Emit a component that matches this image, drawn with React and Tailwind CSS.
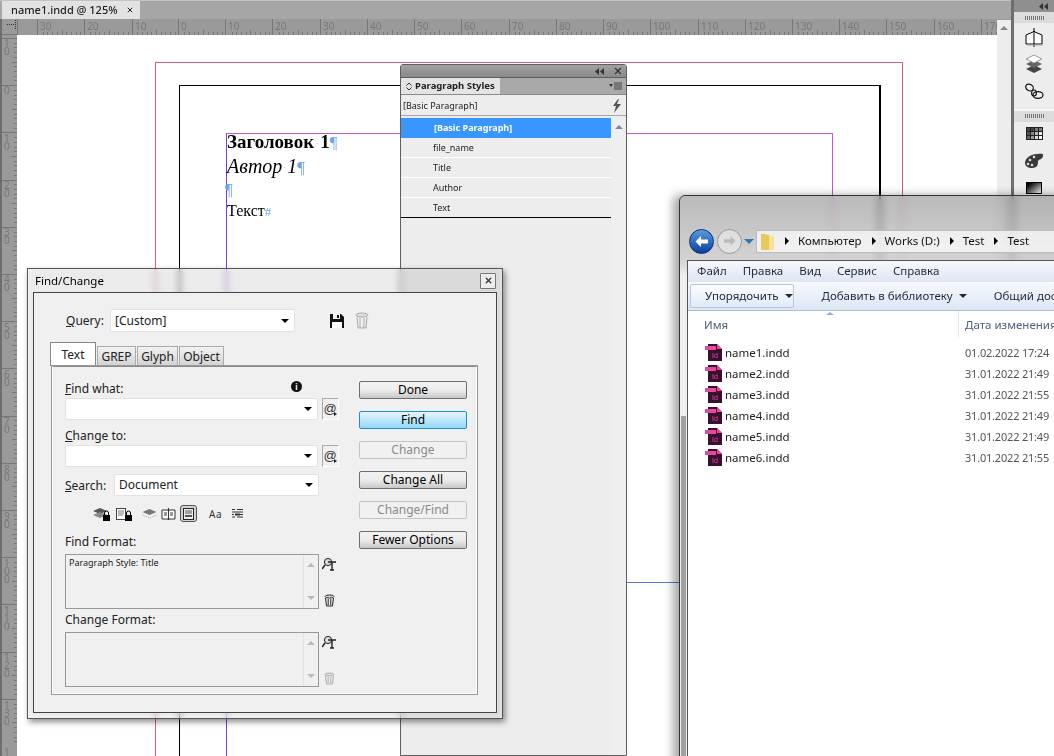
import React from "react";
import { X } from "lucide-react";

const UI = { fontFamily: '"Noto Sans", sans-serif' };

const H_MAJORS = [
  [38, "30"], [85, "20"], [133, "10"], [179, "0"], [226, "10"], [273, "20"], [321, "30"], [368, "40"],
  [415, "50"], [462, "60"], [510, "70"], [557, "80"], [604, "90"], [651, "100"], [699, "110"], [746, "120"],
  [793, "130"], [840, "140"], [887, "150"], [935, "160"], [982, "170"],
];
const V_LABELS = [
  [38, "10"], [85, "0"], [133, "10"], [180, "20"], [227, "30"], [274, "40"],
  [322, "50"], [369, "60"], [416, "70"], [464, "80"], [511, "90"],
  [558, "100"], [605, "110"], [652, "120"], [700, "130"], [747, "140"],
];

function HRuler() {
  const ticks = [];
  for (let i = 0; i < 21 * 10; i++) {
    const x = Math.round(38 + (i * 47.2) / 10) + 0.5;
    if (i % 10 === 0) continue;
    ticks.push(<line key={i} x1={x} x2={x} y1={i % 5 === 0 ? 30 : 32} y2={35} stroke="#777" />);
  }
  return (
    <svg className="absolute left-0 top-0" width="997" height="36">
      {ticks}
      {H_MAJORS.map(([x, t]) => (
        <g key={x}>
          <line x1={x - 0.5} x2={x - 0.5} y1={19} y2={35} stroke="#777" />
          <text x={x + 2} y={30} fontSize="10" fill="#787878" style={UI}>{t}</text>
        </g>
      ))}
      {/* ruler origin */}
      <path d="M2 34.500h15M17.500 19v16" stroke="#777" />
      <path d="M7 24.500h10M15.500 20v9" stroke="#333" strokeDasharray="1 1" />
    </svg>
  );
}

function VRuler() {
  const ticks = [];
  for (let i = 0; i < 150; i++) {
    const y = Math.round(38 + (i * 47.2) / 10) + 0.5;
    if (i % 10 === 0) ticks.push(<line key={i} x1={2} x2={17} y1={y} y2={y} stroke="#777" />);
    else ticks.push(<line key={i} x1={i % 5 === 0 ? 12 : 14} x2={17} y1={y} y2={y} stroke="#777" />);
  }
  return (
    <svg className="absolute left-0 top-[35px]" width="18" height="721" viewBox="0 35 18 721">
      {ticks}
      {V_LABELS.map(([y, label]) => (
        <text key={y} fontSize="10" fill="#787878" style={UI}>
          {label.split("").map((d, i) => (
            <tspan key={i} x={4} y={y + 9 + i * 8}>{d}</tspan>
          ))}
        </text>
      ))}
    </svg>
  );
}

function Pilcrow() {
  return <span className="text-[#6ea5f0] font-normal not-italic text-[17px]">¶</span>;
}

function Canvas() {
  return (
    <div className="absolute left-[17px] top-[35px] w-[980px] h-[721px] bg-white">
      {/* bleed, page and margin guides */}
      <div className="absolute left-[138px] top-[27px] w-[748px] h-[800px] border border-[#c8647a]" />
      <div className="absolute left-[162px] top-[50px] w-[702px] h-[800px] border border-l-black border-t-black border-r-2 border-r-black border-b-0" />
      <div className="absolute left-[209px] top-[98px] w-[607px] h-[800px] border border-t-[#c458c4] border-r-[#c458c4] border-l-[#8040c8] border-b-0" />
      <div className="absolute left-[600px] top-[547px] w-[70px] h-px bg-[#4a80d8]" />
      <div className="absolute left-[210px] top-[97px] text-black leading-none" style={{ fontFamily: '"Liberation Serif", serif' }}>
        <div className="h-[23px] text-[19px] leading-[20px] font-bold whitespace-nowrap">Заголовок<span className="inline-block w-[6px] text-center text-[#6ea5f0] text-[8px] font-normal align-middle">·</span>1<Pilcrow /></div>
        <div className="h-[25px] text-[20px] leading-[22px] italic whitespace-nowrap">Автор<span className="inline-block w-[5px] text-center text-[#6ea5f0] text-[8px] font-normal align-middle">·</span>1<Pilcrow /></div>
        <div className="h-[21px] -ml-[2px] leading-[20px]"><Pilcrow /></div>
        <div className="text-[16px] leading-[20px] whitespace-nowrap">Текст<span className="text-[#6ea5f0] text-[13px]">#</span></div>
      </div>
    </div>
  );
}

function DockIcon({ children }) {
  return <div className="h-[27.5px] flex items-center justify-center">{children}</div>;
}

function Collapse({ c }) {
  return (
    <svg width="9" height="7" viewBox="0 0 9 7" fill={c}><path d="M4 0v7L0 3.500z" /><path d="M9 0v7L5 3.500z" /></svg>
  );
}

function RightDock() {
  return (
    <div className="absolute left-[997px] top-0 w-[57px] h-[756px] flex">
      <div className="w-[14px] mt-[20px] bg-[#ededed] flex justify-center pt-[6px]">
        <div className="w-0 h-0 border-x-[4px] border-x-transparent border-b-[4px] border-b-[#888]" />
      </div>
      <div className="w-[3px] bg-[#6f6f6f]" />
      <div className="flex-1 flex flex-col bg-[#7f7f7f]">
        <div className="h-[12px] bg-[#8f8f8f] flex items-center justify-end pr-[6px]"><Collapse c="#333" /></div>
        <div className="bg-[#ededed]">
          <Gripper />
          <div className="pb-[3px]">
            <DockIcon>
              <svg width="20" height="20" viewBox="0 0 20 20"><path d="M2 17V8l7-3 1-1 1 1 7 3v9z" fill="#fff" stroke="#000" /><path d="M10 1v19" stroke="#000" /><path d="M3 18h16" stroke="#aaa" /></svg>
            </DockIcon>
            <DockIcon>
              <svg width="20" height="20" viewBox="0 0 20 20"><path d="M10 11l8 4-8 4-8-4z" fill="#444" /><path d="M10 6l8 4-8 4-8-4z" fill="#666" /><path d="M10 1l8 4-8 4-8-4z" fill="#fff" stroke="#999" /></svg>
            </DockIcon>
            <DockIcon>
              <svg width="20" height="20" viewBox="0 0 20 20" fill="#eee" stroke="#111" strokeWidth="1.2"><ellipse cx="5.500" cy="5.500" rx="4" ry="3.200" transform="rotate(30 5.500 5.500)" /><ellipse cx="14" cy="13" rx="5" ry="3.400" /><ellipse cx="10" cy="11" rx="2.400" ry="3" fill="none" /></svg>
            </DockIcon>
          </div>
        </div>
        <div className="h-[2px] bg-[#f4f4f4]" />
        <div className="bg-[#ededed] flex-1">
          <Gripper />
          <div className="-mt-[2px]">
            <DockIcon>
              <div className="grid grid-cols-4 gap-px w-[17px] h-[13px] bg-[#222] p-px">
                {["#444","#444","#777","#777","#555","#888","#bbb","#eee","#666","#999","#ddd","#fff"].map((c, i) => (
                  <div key={i} style={{ background: c }} />
                ))}
              </div>
            </DockIcon>
            <DockIcon>
              <svg width="20" height="18" viewBox="0 0 20 18"><path d="M1 11c0-5 6-9 12-9 3 0 7-1 6 2-1 4-4 3-5 5 0 3 0 7-6 7-4 0-7-2-7-5z" fill="#3a3a3a" /><circle cx="6" cy="8" r="1.300" fill="#ddd" /><circle cx="10" cy="5" r="1.300" fill="#ddd" /><circle cx="4" cy="12" r="1.300" fill="#ddd" /><circle cx="8" cy="13" r="1.300" fill="#ddd" /></svg>
            </DockIcon>
            <DockIcon>
              <div className="w-[16px] h-[12px] border border-black bg-gradient-to-br from-black to-white" />
            </DockIcon>
          </div>
        </div>
      </div>
    </div>
  );
}

function Gripper() {
  return (
    <div className="h-[11px] bg-[#dcdcdc] flex items-center justify-center gap-[1px]">
      {[0, 1, 2, 3, 4, 5, 6, 7, 8, 9].map((i) => (
        <div key={i} className="w-px h-[4px] bg-[#777]" />
      ))}
    </div>
  );
}

function ParagraphStyles() {
  const rows = ["file_name", "Title", "Author", "Text"];
  return (
    <div className="absolute left-[400px] top-[64px] w-[227px] h-[692px] bg-[#ededed] border border-[#5f5f5f] rounded-t-[3px] flex flex-col text-[9px] text-[#222]" style={UI}>
      <div className="h-[13px] bg-gradient-to-b from-[#a0a0a0] to-[#8a8a8a] flex items-center justify-end gap-[9px] pr-[3px] border-b border-[#5f5f5f]">
        <Collapse c="#333" />
        <X size={10} strokeWidth={3} className="text-[#333]" />
      </div>
      <div className="h-[17px] bg-[#a9a9a9] flex items-stretch border-b border-[#8a8a8a]">
        <div className="w-[99px] bg-[#e4e4e4] flex items-center pl-[5px] pt-[1px] font-bold gap-[3px]">
          <svg width="6" height="9" viewBox="0 0 6 9" fill="none" stroke="#333"><path d="M.5 3.500L3 1l2.500 2.500M.5 5.500L3 8l2.500-2.500" /></svg>
          <span className="text-[9.5px]">Paragraph Styles</span>
        </div>
        <div className="flex-1 flex items-center justify-end pr-[3px]">
          <svg width="14" height="8" viewBox="0 0 14 8"><path d="M0 2h4L2 5z" fill="#333" /><path d="M5 1h8M5 3h8M5 5h8M5 7h8" stroke="#444" /></svg>
        </div>
      </div>
      <div className="h-[21px] flex items-center justify-between pl-[2px] pr-[4px] pt-[1px] border-b border-[#a8a8a8]">
        <span>[Basic Paragraph]</span>
        <svg width="10" height="14" viewBox="0 0 10 14"><path d="M6 0L1 7h3l-2 7 7-9H5l2-5z" fill="#555" /></svg>
      </div>
      <div className="flex flex-1 pt-[2px]">
        <div className="w-[210px]">
          <div className="h-[20px] bg-[#3a96ff] text-white font-bold flex items-center pl-[33px]">[Basic Paragraph]</div>
          {rows.map((r) => (
            <div key={r} className="h-[20px] flex items-center pl-[32px] border-b border-white last:border-b-black">{r}</div>
          ))}
        </div>
        <div className="flex-1 flex justify-center pt-[7px] bg-[#efefef]">
          <div className="w-0 h-0 border-x-[4px] border-x-transparent border-b-[4px] border-b-[#888]" />
        </div>
      </div>
    </div>
  );
}

function Caret() {
  return <div className="w-0 h-0 border-x-[4px] border-x-transparent border-t-[4px] border-t-black" />;
}

function Combo({ label, className }) {
  return (
    <div className={"h-[22px] bg-white border border-[#e2e2e2] rounded-[2px] flex items-center justify-between pl-[4px] pr-[5px] " + className}>
      <span>{label}</span>
      <Caret />
    </div>
  );
}

function AtButton() {
  return (
    <div className="relative w-[17px] h-[22px] border border-[#aaa] border-r-white border-b-white flex items-center justify-center text-[13px] text-[#333] leading-none pb-[2px] pr-[1px]" style={{ fontFamily: '"Liberation Sans", sans-serif' }}>
      @
      <div className="absolute right-[1px] bottom-[3px] w-0 h-0 border-y-[2px] border-y-transparent border-l-[3px] border-l-[#222]" />
    </div>
  );
}

function Btn({ children, mode }) {
  const look =
    mode === "off"
      ? "border-[#c4c4c4] bg-[#f1f1f1] text-[#8a8a8a]"
      : mode === "focus"
        ? "border-[#1d8fd0] bg-gradient-to-b from-[#e6f6fd] to-[#93d6f6] text-black"
        : "border-[#6f6f6f] bg-gradient-to-b from-[#f2f2f2] via-[#ececec] to-[#c8c8c8] text-black";
  return (
    <div className={"h-[18px] w-[108px] rounded-[2px] border flex items-center justify-center " + look}>{children}</div>
  );
}

function FormatBox({ text }) {
  return (
    <div className="w-[254px] h-[55px] border border-[#999] flex">
      <div className="flex-1 pl-[3px] pt-[1px] text-[9px] text-[#222]">{text}</div>
      <div className="w-[15px] border-l border-[#e2e2e2] flex flex-col items-center justify-between py-[8px]">
        <div className="w-0 h-0 border-x-[4px] border-x-transparent border-b-[4px] border-b-[#bbb]" />
        <div className="w-0 h-0 border-x-[4px] border-x-transparent border-t-[4px] border-t-[#bbb]" />
      </div>
    </div>
  );
}

function FormatIcon() {
  return (
    <svg width="15" height="14" viewBox="0 0 15 14" fill="none" stroke="#222"><circle cx="6" cy="5" r="3.600" fill="#ddd" /><path d="M3 8L0 12" strokeWidth="1.600" /><path d="M6 5h8M10 5v8M8 13h4" strokeWidth="1.400" /></svg>
  );
}

function TrashIcon({ c }) {
  return (
    <svg width="11" height="13" viewBox="0 0 11 13" fill="none" stroke={c}><ellipse cx="5.500" cy="2.500" rx="4.500" ry="1.500" fill="#ddd" /><path d="M1.500 4l1 8h6l1-8M4.200 5v6M6.800 5v6" /></svg>
  );
}

function Lock() {
  return (
    <>
      <rect x="10" y="8" width="7" height="6" fill="#000" />
      <path d="M11.500 8V6a2 2 0 014 0v2" stroke="#000" fill="none" />
    </>
  );
}

function SearchIcons() {
  return (
    <div className="flex items-center mt-[8px] ml-[28px] h-[19px] text-[#333]">
      <svg width="18" height="14" viewBox="0 0 18 14"><path d="M7 1l7 3-7 3-7-3z" fill="#555" /><path d="M7 5l7 3-7 3-7-3z" fill="#888" /><Lock /></svg>
      <svg className="ml-[4px]" width="17" height="14" viewBox="0 0 17 14"><rect x="1.500" y="1.500" width="9" height="11" fill="#fff" stroke="#444" /><path d="M3 4h6M3 6h6M3 8h5" stroke="#777" /><Lock /></svg>
      <svg className="ml-[10px]" width="15" height="12" viewBox="0 0 15 12"><path d="M7.500 1l7 3-7 3-7-3z" fill="#777" /><path d="M.5 7l7 3 7-3" stroke="#aaa" fill="none" strokeDasharray="1 1" /></svg>
      <svg className="ml-[4px]" width="15" height="14" viewBox="0 0 15 14"><path d="M1 3h6l.5 1L8 3h6v9H8l-.5 1L7 12H1z" fill="#fff" stroke="#333" /><path d="M7.500 1v12" stroke="#333" /><rect x="3" y="5" width="3" height="4" fill="#999" /><rect x="9" y="5" width="3" height="4" fill="#999" /></svg>
      <div className="ml-[4px] w-[17px] h-[17px] border border-[#555] rounded-[3px] bg-[#d4d4d4] flex items-center justify-center">
        <svg width="11" height="12" viewBox="0 0 11 12"><rect x=".5" y=".5" width="10" height="11" fill="#eee" stroke="#222" /><path d="M2 3h7M2 5h7" stroke="#555" /><rect x="2" y="7" width="7" height="2" fill="#555" /></svg>
      </div>
      <span className="ml-[12px] text-[10px] leading-none tracking-[0.5px]">Aa</span>
      <svg className="ml-[9px]" width="13" height="10" viewBox="0 0 13 10"><path d="M1 .5h3M6 .5h6M1 3h11M1 5.500h2M9 5.500h3M1 8h3M6 8h6" stroke="#333" /><rect x="4" y="4.500" width="5" height="2" fill="#333" /></svg>
    </div>
  );
}

function Label({ u, rest, className }) {
  return (
    <div className={"leading-[15px] " + (className || "")}>
      <span className="underline">{u}</span>{rest}
    </div>
  );
}

function FindChange() {
  const tabs = [["GREP", "w-[39px]"], ["Glyph", "w-[41px]"], ["Object", "w-[45px]"]];
  return (
    <div className="absolute left-[27px] top-[268px] w-[476px] h-[451px] border border-[#555] backdrop-blur-[3px] backdrop-brightness-[.92] shadow-[2px_3px_6px_rgba(0,0,0,0.45)] flex flex-col px-[5px] pb-[5px] text-[12px] text-[#222]" style={UI}>
      <div className="h-[23px] flex items-center justify-between -mx-[5px] px-[7px]">
        <span className="text-black text-[11.5px]">Find/Change</span>
        <div className="w-[16px] h-[16px] mr-[-1px] border border-[#777] rounded-[1px] flex items-center justify-center bg-[#eee]">
          <X size={9} strokeWidth={3.500} className="text-[#333]" />
        </div>
      </div>
      <div className="flex-1 bg-[#f0f0f0] border border-[#444] flex flex-col pt-[16px] pl-[17px]">
        <div className="flex items-center h-[23px] pl-[15px]">
          <Label u="Q" rest="uery:" className="w-[44px]" />
          <Combo label="[Custom]" className="w-[185px] h-[23px]" />
          <svg className="ml-[34px]" width="16" height="16" viewBox="0 0 16 16"><path d="M1 1h11l3 3v11H1z" fill="#111" /><rect x="4" y="1" width="7" height="5" fill="#eee" /><rect x="8" y="2" width="2" height="3" fill="#111" /><rect x="3" y="9" width="10" height="6" fill="#fff" /></svg>
          <svg className="ml-[10px]" width="14" height="17" viewBox="0 0 14 17" fill="none" stroke="#aaa"><ellipse cx="7" cy="3" rx="6" ry="2" fill="#ddd" /><path d="M2 5l1 11h8l1-11M5 6v10M9 6v10" /></svg>
        </div>
        <div className="flex items-end mt-[10px] h-[24px] pr-[18px] -ml-[1px]">
          <div className="w-[46px] h-[24px] bg-white border border-[#888] border-b-0 flex items-center justify-center text-[#222]">Text</div>
          {tabs.map(([t, w]) => (
            <div key={t} className={w + " h-[20px] ml-[1px] border border-[#aaa] border-b-0 bg-gradient-to-b from-[#f2f2f2] to-[#d2d2d2] flex items-center justify-center"}>{t}</div>
          ))}
        </div>
        <div className="w-[427px] h-[330px] border-t-2 border-t-[#888] border-l-2 border-l-white border-r-2 border-r-white border-b-2 border-b-white outline outline-[#999] -outline-offset-1 flex pl-[12px] pr-[9px] pt-[14px] -mt-[1px]">
          <div className="w-[293px]">
            <Label u="F" rest="ind what:" />
            <div className="flex gap-[4px] mt-[2px]">
              <Combo className="w-[253px]" />
              <AtButton />
            </div>
            <Label u="C" rest="hange to:" className="mt-[8px]" />
            <div className="flex gap-[4px] mt-[2px]">
              <Combo className="w-[253px]" />
              <AtButton />
            </div>
            <div className="flex items-center mt-[7px]">
              <Label u="S" rest="earch:" className="w-[49px]" />
              <Combo label="Document" className="w-[205px]" />
            </div>
            <SearchIcons />
            <div className="leading-[15px] mt-[11px]">Find Format:</div>
            <div className="flex mt-[5px]">
              <FormatBox text="Paragraph Style: Title" />
              <div className="flex flex-col items-center justify-between pt-[3px] pb-[2px] ml-[3px] w-[15px]">
                <FormatIcon />
                <TrashIcon c="#222" />
              </div>
            </div>
            <div className="leading-[15px] mt-[3px]">Change Format:</div>
            <div className="flex mt-[5px]">
              <FormatBox />
              <div className="flex flex-col items-center justify-between pt-[3px] pb-[2px] ml-[3px] w-[15px]">
                <FormatIcon />
                <TrashIcon c="#aaa" />
              </div>
            </div>
          </div>
          <div className="flex flex-col gap-[12px] ml-[3px] relative">
            <Btn>Done</Btn>
            <Btn mode="focus">Find</Btn>
            <Btn mode="off">Change</Btn>
            <Btn>Change All</Btn>
            <Btn mode="off">Change/Find</Btn>
            <Btn>Fewer Options</Btn>
            <div className="absolute left-[-68px] top-0 w-[11px] h-[11px] rounded-full bg-[#111] text-white text-[8px] font-bold leading-[11px] text-center">i</div>
          </div>
        </div>
      </div>
    </div>
  );
}

function InddIcon() {
  return (
    <svg width="17" height="17" viewBox="0 0 17 17" className="shrink-0">
      <path d="M3 0h9l5 5v12H3z" fill="#3a1030" />
      <path d="M12 0l5 5h-5z" fill="#e8499a" />
      <rect x="0" y="2" width="11" height="4" fill="#e8499a" />
      <text x="7" y="14" fontSize="7" fill="#e8499a" fontFamily="Liberation Sans, sans-serif">Id</text>
    </svg>
  );
}

function Explorer() {
  const menu = ["Файл", "Правка", "Вид", "Сервис", "Справка"];
  const crumbs = ["Компьютер", "Works (D:)", "Test", "Test"];
  const files = [
    ["name1.indd", "01.02.2022 17:24"],
    ["name2.indd", "31.01.2022 21:49"],
    ["name3.indd", "31.01.2022 21:55"],
    ["name4.indd", "31.01.2022 21:49"],
    ["name5.indd", "31.01.2022 21:49"],
    ["name6.indd", "31.01.2022 21:55"],
  ];
  return (
    <div className="absolute left-[679px] top-[195px] w-[390px] h-[580px] rounded-tl-[6px] border border-[#333] bg-gradient-to-b from-[#777]/50 via-[#c0c0c0]/70 via-[11%] to-[#eee]/90 to-[14%] backdrop-blur-[4px] shadow-[-6px_0_10px_rgba(0,0,0,0.35)] flex flex-col text-[11.5px] text-[#1e2a3a]" style={UI}>
      <div className="absolute left-[1px] top-[220px] w-[5px] h-[360px] bg-[#a0a0a0]" />
      <div className="h-[30px]" />
      <div className="h-[30px] flex items-center pl-[9px]">
        <div className="w-[25px] h-[25px] rounded-full bg-gradient-to-b from-[#5b9be0] to-[#0b3f9c] border border-[#0b2f70] flex items-center justify-center shrink-0">
          <svg width="15" height="13" viewBox="0 0 15 13"><path d="M7 1L1.500 6.500 7 12V8.500h7v-4H7z" fill="#fff" /></svg>
        </div>
        <div className="ml-[3px] w-[25px] h-[25px] rounded-full bg-white/40 border border-[#999] flex items-center justify-center shrink-0">
          <svg width="14" height="12" viewBox="0 0 15 13"><path d="M8 1l5.500 5.500L8 12V8.500H1v-4h7z" fill="#bbb" /></svg>
        </div>
        <div className="ml-[2px] w-0 h-0 border-x-[5px] border-x-transparent border-t-[5px] border-t-[#2a7ab8]" />
        <div className="ml-[2px] flex-1 h-[23px] bg-white/70 border border-[#bbb] flex items-center pl-[4px] text-[#111]">
          <svg width="14" height="18" viewBox="0 0 14 18"><path d="M0 2h5l1 1h2v15H0z" fill="#e8c85a" /><path d="M8 3l5 2v13H8z" fill="#f6e39a" /></svg>
          <div className="flex items-center whitespace-nowrap">
            {crumbs.map((c, i) => (
              <div key={i} className="flex items-center">
                <div className="ml-[10px] mr-[9px] w-0 h-0 border-y-[4px] border-y-transparent border-l-[4px] border-l-black" />
                <span>{c}</span>
              </div>
            ))}
          </div>
        </div>
      </div>
      <div className="flex-1 ml-[7px] mt-[4px] bg-white border-t border-l border-[#555] flex flex-col relative">
        <div className="h-[21px] pb-[1px] bg-gradient-to-b from-[#f6f8fc] to-[#dfe6f3] flex items-center gap-[16px] pl-[9px]">
          {menu.map((m) => <span key={m}>{m}</span>)}
        </div>
        <div className="h-[29px] bg-gradient-to-b from-[#f6f9fd] to-[#dce7f4] border-b border-[#a8c0d8] flex items-center pl-[2px] whitespace-nowrap">
          <div className="w-[115px] h-[24px] pl-[14px] rounded-[2px] border border-[#b4c8dc] bg-gradient-to-b from-[#fbfdff] to-[#dfeaf6] flex items-center gap-[6px]">
            Упорядочить
            <div className="w-0 h-0 border-x-[4px] border-x-transparent border-t-[4px] border-t-[#1e2a3a]" />
          </div>
          <div className="ml-[28px] flex items-center gap-[6px]">
            Добавить в библиотеку
            <div className="w-0 h-0 border-x-[4px] border-x-transparent border-t-[4px] border-t-[#1e2a3a]" />
          </div>
          <span className="ml-[27px]">Общий доступ</span>
        </div>
        <div className="h-[26px] flex relative text-[#4c607a]">
          <div className="w-[271px] pl-[16px] pt-[5px] border-r border-[#dfe6ee]">Имя</div>
          <div className="pl-[6px] pt-[5px] whitespace-nowrap">Дата изменения</div>
          <div className="absolute left-[138px] top-[1px] w-0 h-0 border-x-[4px] border-x-transparent border-b-[3px] border-b-[#8fb0d0]" />
        </div>
        <div className="pt-[5px]">
          {files.map(([n, d]) => (
            <div key={n} className="h-[21px] flex items-center pl-[17px] text-[#222]">
              <InddIcon />
              <span className="ml-[3px] w-[240px]">{n}</span>
              <span className="text-[#555] text-[11px] pt-[2px] -tracking-[0.2px] whitespace-nowrap">{d}</span>
            </div>
          ))}
        </div>
      </div>
    </div>
  );
}

export default function App() {
  return (
    <div className="relative w-[1054px] h-[756px] overflow-hidden bg-[#9a9a9a]" style={UI}>
      <div className="absolute left-0 top-0 w-[1012px] h-[19px] bg-[#a6a6a6] border-t border-[#c4c4c4]">
        <div className="ml-[2px] w-[138px] h-[18px] bg-[#e2e2e2] flex items-center justify-between pl-[9px] pr-[6px] text-[11px] text-[#222] font-medium">
          <span>name1.indd @ 125%</span>
          <X size={8} strokeWidth={3} />
        </div>
      </div>
      <HRuler />
      <VRuler />
      <div className="absolute left-0 top-[19px] w-[2px] h-[737px] bg-[#6e6e6e]" />
      <Canvas />
      <RightDock />
      <ParagraphStyles />
      <FindChange />
      <Explorer />
    </div>
  );
}
